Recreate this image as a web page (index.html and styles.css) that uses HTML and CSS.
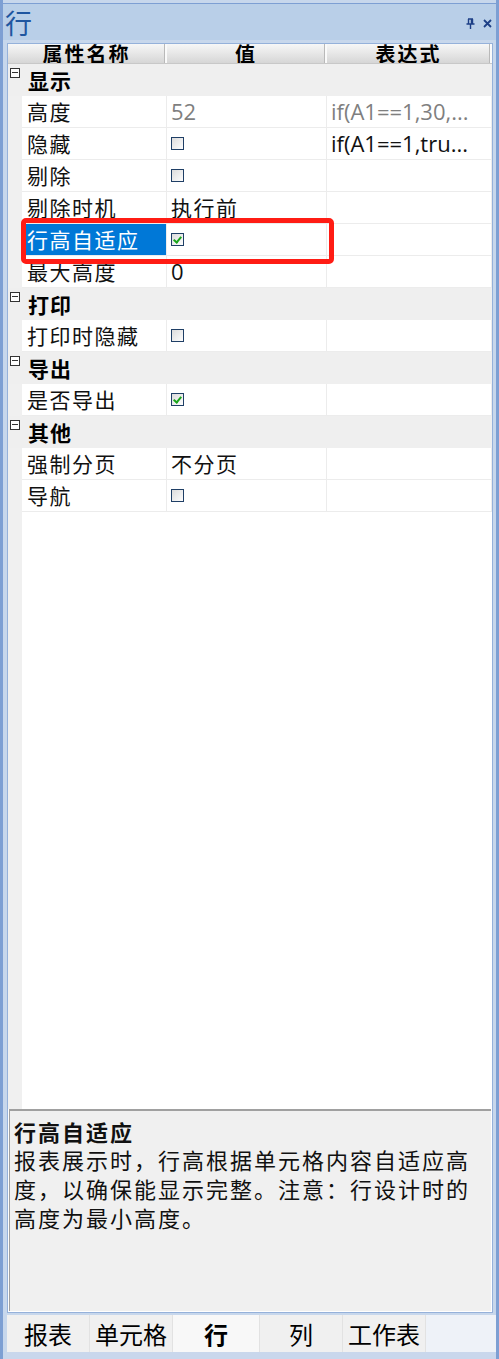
FILE: index.html
```html
<!DOCTYPE html>
<html lang="zh-CN">
<head>
	<meta charset="UTF-8">
	<title>行</title>
	<link rel="stylesheet" href="styles.css">
</head>
<body>
	<div class="window">
		<!-- title bar -->
		<div class="titlebar">
			<span class="title">行</span>
			<div class="tools">
				<svg width="9" height="11" viewBox="0 0 9 11"><path d="M2 1h5M2.5 1v5M6.5 1v5M5.5 1v5M0.5 6h8M4.5 6v5" stroke="#1d3f86" stroke-width="1.4" fill="none"/></svg>
				<svg width="9" height="9" viewBox="0 0 9 9"><path d="M1 1l7 7M8 1l-7 7" stroke="#1d3f86" stroke-width="1.8"/></svg>
			</div>
		</div>

		<div class="frame">
			<div class="grid">
				<div class="head">
					<div class="hcell">属性名称</div>
					<div class="hcell">值</div>
					<div class="hcell">表达式</div>
				</div>

				<div class="cat"><span class="tog"></span><span>显示</span></div>
				<div class="row"><i></i><div class="cell">高度</div><div class="cell num gray">52</div><div class="cell num gray">if(A1==1,30,...</div></div>
				<div class="row"><i></i><div class="cell">隐藏</div><div class="cell"><span class="chk"></span></div><div class="cell num">if(A1==1,tru...</div></div>
				<div class="row"><i></i><div class="cell">剔除</div><div class="cell"><span class="chk"></span></div><div class="cell"></div></div>
				<div class="row"><i></i><div class="cell">剔除时机</div><div class="cell">执行前</div><div class="cell"></div></div>
				<div class="row"><i></i><div class="cell sel">行高自适应</div><div class="cell"><span class="chk on"></span></div><div class="cell"></div></div>
				<div class="row"><i></i><div class="cell">最大高度</div><div class="cell num">0</div><div class="cell"></div></div>

				<div class="cat"><span class="tog"></span><span>打印</span></div>
				<div class="row"><i></i><div class="cell">打印时隐藏</div><div class="cell"><span class="chk"></span></div><div class="cell"></div></div>

				<div class="cat"><span class="tog"></span><span>导出</span></div>
				<div class="row"><i></i><div class="cell">是否导出</div><div class="cell"><span class="chk on"></span></div><div class="cell"></div></div>

				<div class="cat"><span class="tog"></span><span>其他</span></div>
				<div class="row"><i></i><div class="cell">强制分页</div><div class="cell">不分页</div><div class="cell"></div></div>
				<div class="row"><i></i><div class="cell">导航</div><div class="cell"><span class="chk"></span></div><div class="cell"></div></div>

				<div class="filler"><i></i><div></div></div>

				<!-- red mark drawn over the selected row -->
				<div class="mark"></div>
			</div>

			<div class="desc">
				<div class="desc-title">行高自适应</div>
				<div class="desc-text">报表展示时，行高根据单元格内容自适应高度，以确保能显示完整。注意：行设计时的高度为最小高度。</div>
			</div>
		</div>

		<div class="tabs">
			<div class="tab">报表</div>
			<div class="tab">单元格</div>
			<div class="tab active">行</div>
			<div class="tab">列</div>
			<div class="tab">工作表</div>
		</div>
	</div>
</body>
</html>
```

FILE: styles.css
```css
:root{
	--frame: #7d9fd3;
	--line: #ececec;
	--gutter: #f0f0f0;
	--cjk: "Noto Sans CJK SC", sans-serif;
}
*{
	box-sizing: border-box;
}
body {
	margin: 0;
	font-family: var(--cjk);
	background-color: #dfe7f2;
}

.window {
	width: 499px;
	height: 1359px;
	display: flex;
	flex-direction: column;
	border-left: 3px solid var(--frame);
	border-right: 3px solid var(--frame);
	background-color: #c7d7ec;
	padding-top: 3px;
}

/* title */
.titlebar {
	height: 37px;
	border-top: 1px solid var(--frame);
	background-color: #b9cfe8;
	display: flex;
	align-items: center;
	justify-content: space-between;
	padding: 0 4px 0 2px;
}
.title {
	font-size: 27px;
	color: #1f56a0;
	line-height: 1;
	margin-top: 2px;
}
.tools {
	display: flex;
	gap: 8px;
	align-items: center;
	margin-top: 4px;
}

/* property grid */
.frame {
	margin: 3px 3px 0 4px;
	border: 1px solid #95b1da;
	background-color: white;
	height: 1272px;
	display: flex;
	flex-direction: column;
}
.grid {
	position: relative;
	flex: 1;
	display: flex;
	flex-direction: column;
}
.head {
	display: grid;
	grid-template-columns: 159px 160px 1fr;
	height: 20px;
	overflow: hidden;
	background: linear-gradient(#f7f7f7, #d6d6d6);
	border-bottom: 1px solid #c8c8c8;
}
.hcell {
	font-weight: bold;
	font-size: 20px;
	line-height: 20px;
	text-align: center;
	letter-spacing: 2px;
	border-right: 2px solid #fafafa;
	box-shadow: inset -1px 0 0 #b9b9b9;
}
.cat {
	height: 32px;
	background-color: #efefef;
	display: flex;
	align-items: center;
	font-weight: bold;
	font-size: 21px;
	letter-spacing: 1px;
	gap: 8px;
	padding-left: 2px;
}
.tog {
	width: 10px;
	height: 10px;
	border: 1px solid #333;
	align-self: flex-start;
	margin-top: 4px;
	background: linear-gradient(#333, #333) center / 6px 1px no-repeat, white;
}
.row {
	display: grid;
	grid-template-columns: 14px 145px 160px 1fr;
	height: 32px;
}
.row i, .filler i {
	background-color: var(--gutter);
}
.cell {
	display: flex;
	align-items: center;
	padding-left: 5px;
	font-size: 21px;
	letter-spacing: 1.5px;
	color: #111;
	border-right: 1px solid var(--line);
	border-bottom: 1px solid var(--line);
	white-space: nowrap;
	overflow: hidden;
}
.cell + .cell {
	padding-left: 4px;
}
.num {
	font-family: "Open Sans", var(--cjk);
	letter-spacing: 0;
	font-size: 22px;
}
.gray {
	color: #7f7f7f;
}
.sel {
	background-color: #0078d7;
	color: white;
}
.chk {
	width: 13px;
	height: 13px;
	border: 1px solid #1f3f66;
	background: linear-gradient(135deg, #dcdcdc, #fdfdfd);
	position: relative;
}
.chk.on::after {
	content: "";
	position: absolute;
	left: 3px;
	top: 1px;
	width: 3px;
	height: 6px;
	border-right: 2px solid #1aa51a;
	border-bottom: 2px solid #1aa51a;
	transform: rotate(40deg);
}
.filler {
	flex: 1;
	display: grid;
	grid-template-columns: 14px 1fr;
}
.mark {
	position: absolute;
	left: 13px;
	top: 174px;
	width: 313px;
	height: 46px;
	border: 5px solid #ff1c14;
	border-radius: 5px;
}

/* description */
.desc {
	height: 202px;
	margin: 0 1px 1px 1px;
	background-color: #f0f0f0;
	border-top: 2px solid #a0a0a0;
	border-left: 1px solid #a0a0a0;
	padding: 6px 10px 0 4px;
	font-size: 22px;
	letter-spacing: 2px;
	color: #111;
}
.desc-title {
	font-weight: bold;
	line-height: 28px;
}
.desc-text {
	line-height: 29px;
}

/* tabs */
.tabs {
	display: flex;
	margin: 2px 0 0 4px;
	background-color: #eef2f8;
	border-bottom: 7px solid #c9d7ec;
	height: 44px;
}
.tab {
	height: 37px;
	display: flex;
	align-items: center;
	justify-content: center;
	font-size: 24px;
	width: 83px;
	background-color: #f0f0f0;
	border-right: 1px solid #e2e2e2;
}
.tab.active {
	width: 87px;
	font-weight: bold;
	background-color: #f8f8f8;
}
```
